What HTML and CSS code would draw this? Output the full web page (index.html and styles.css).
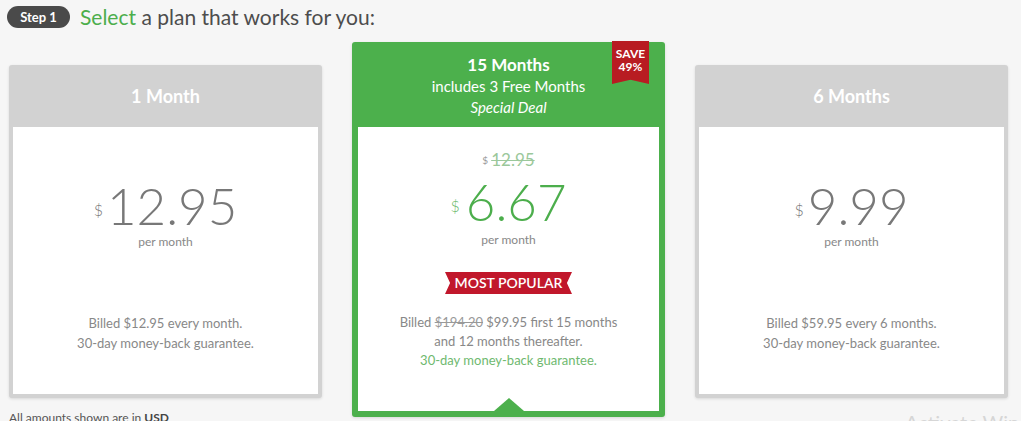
FILE: index.html
```html
<!DOCTYPE html>
<html lang="en">
<head>
<meta charset="utf-8">
<title>Select a plan</title>
<link rel="stylesheet" href="styles.css">
</head>
<body>
<div class="page">
  <div class="step-head">
    <span class="step-pill">Step 1</span>
    <h1 class="step-title"><span class="green">Select</span> a plan that works for you:</h1>
  </div>
  <div class="plans">
    <div class="col side">
      <div class="card">
        <div class="card-head"><div class="plan-name">1 Month</div></div>
        <div class="card-body">
          <div class="price"><span class="cur">$</span>12.95</div>
          <div class="per">per month</div>
          <div class="billed">Billed $12.95 every month.<br>30-day money-back guarantee.</div>
        </div>
      </div>
      <div class="note">All amounts shown are in <b>USD</b></div>
    </div>
    <div class="col">
      <div class="card featured">
        <div class="save">SAVE<br>49%</div>
        <div class="card-head">
          <div class="plan-name">15 Months</div>
          <div class="plan-sub">includes 3 Free Months</div>
          <div class="plan-deal">Special Deal</div>
        </div>
        <div class="card-body">
          <div class="old-price"><span class="cur-s">$</span><s>12.95</s></div>
          <div class="price"><span class="cur">$</span>6.67</div>
          <div class="per">per month</div>
          <div class="popular">MOST POPULAR</div>
          <div class="billed">Billed <s>$194.20</s> $99.95 first 15 months<br>and 12 months thereafter.<br><span class="guar">30-day money-back guarantee.</span></div>
          <span class="pointer"></span>
        </div>
      </div>
    </div>
    <div class="col side">
      <div class="card">
        <div class="card-head"><div class="plan-name">6 Months</div></div>
        <div class="card-body">
          <div class="price"><span class="cur">$</span>9.99</div>
          <div class="per">per month</div>
          <div class="billed">Billed $59.95 every 6 months.<br>30-day money-back guarantee.</div>
        </div>
      </div>
    </div>
  </div>
  <div class="watermark">Activate Windows</div>
</div>
</body>
</html>
```

FILE: styles.css
```css
* { box-sizing: border-box; }
html, body { margin: 0; padding: 0; }
body {
  background: #f6f6f6;
  font-family: Lato, "Open Sans", Arial, sans-serif;
  color: #555;
  width: 1021px;
  height: 421px;
  overflow: hidden;
}
.page { position: relative; height: 421px; }

.step-head {
  display: flex;
  align-items: center;
  gap: 10px;
  padding: 5px 0 0 7px;
  height: 28px;
}
.step-pill {
  display: inline-flex;
  align-items: center;
  justify-content: center;
  width: 63px;
  height: 22px;
  border-radius: 11px;
  background: #4a4a4a;
  color: #fff;
  font-size: 13px;
  font-weight: 700;
}
.step-title {
  margin: 0;
  font-size: 21px;
  line-height: 22px;
  font-weight: 400;
  color: #4d4d4d;
}
.green { color: #4cae4c; }

.plans {
  display: flex;
  gap: 30px;
  padding: 14px 0 0 9px;
}
.col { width: 313px; display: flex; flex-direction: column; }
.col.side { padding-top: 23px; }

.card {
  position: relative;
  background: #d2d2d2;
  padding: 0 4px 4px;
  border-radius: 3px;
  box-shadow: 0 1px 3px rgba(0,0,0,0.12);
}
.card-head {
  height: 62px;
  display: flex;
  flex-direction: column;
  align-items: center;
  justify-content: center;
  color: #fff;
}
.plan-name { font-size: 18px; font-weight: 700; }
.card-body {
  position: relative;
  background: #fff;
  height: 267px;
  text-align: center;
  padding-top: 53px;
}
.price {
  font-size: 51px;
  line-height: 52px;
  font-weight: 300;
  color: #787878;
}
.cur {
  font-size: 16px;
  vertical-align: top;
  position: relative;
  top: 4px;
  margin-right: 4px;
  font-weight: 300;
}
.per {
  margin-top: 3px;
  font-size: 12px;
  line-height: 14px;
  color: #888;
}
.billed {
  margin-top: 64px;
  font-size: 13px;
  line-height: 20px;
  color: #888;
}

.featured {
  background: #4cb04c;
  padding: 0 6px 6px;
}
.featured .card-head { height: 85px; padding-top: 2px; }
.featured .plan-name { font-size: 17px; line-height: 22px; }
.plan-sub { font-size: 15px; line-height: 21px; }
.plan-deal { font-size: 15px; line-height: 21px; font-style: italic; }
.featured .card-body { height: 284px; padding-top: 23px; }
.old-price {
  font-size: 17px;
  line-height: 20px;
  color: #9bc89b;
}
.cur-s { font-size: 10px; vertical-align: top; margin-right: 3px; color: #9a9a9a; }
.old-price s { text-decoration-thickness: 1px; }
.featured .price { margin-top: 6px; color: #4cae4c; }
.featured .cur { color: #6cba6c; margin-right: 6px; }
.featured .per { margin-top: 5px; }
.popular {
  margin: 25px auto 0;
  width: 127px;
  height: 22px;
  line-height: 22px;
  background: #c1172b;
  color: #fff;
  font-size: 14px;
  font-weight: 600;
  clip-path: polygon(0 0, 100% 0, 96% 50%, 100% 100%, 0 100%, 4% 50%);
}
.featured .billed { margin-top: 19px; line-height: 19px; }
.featured .billed s { color: #999; }
.guar { color: #6fb96f; }
.pointer {
  position: absolute;
  left: 50%;
  bottom: 0;
  margin-left: -15px;
  width: 0;
  height: 0;
  border-left: 15px solid transparent;
  border-right: 15px solid transparent;
  border-bottom: 13px solid #4cb04c;
}
.save {
  position: absolute;
  top: -1px;
  right: 16px;
  width: 37px;
  height: 43px;
  padding-top: 6px;
  background: #b81c22;
  color: #fff;
  font-size: 12px;
  font-weight: 700;
  line-height: 13px;
  text-align: center;
  clip-path: polygon(0 0, 100% 0, 100% 100%, 50% 90%, 0 100%);
}

.note {
  margin-top: 12px;
  font-size: 12px;
  color: #555;
}
.note b { color: #444; }

.watermark {
  position: absolute;
  left: 905px;
  top: 410px;
  font-size: 20px;
  color: #d6d6d6;
  white-space: nowrap;
}
```
